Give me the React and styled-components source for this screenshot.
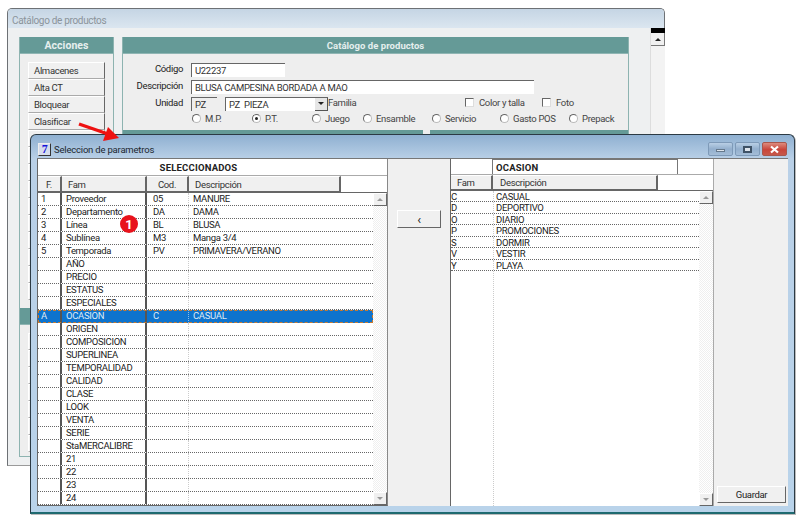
import React from 'react';
import styled, { createGlobalStyle } from 'styled-components';

const Global = createGlobalStyle`
  html, body { margin: 0; padding: 0; background: #fff; }
  body { font-family: Roboto, "Liberation Sans", Arial, sans-serif; font-size: 9.5px; letter-spacing: -.32px; color: #222; }
`;

const Desktop = styled.div`position: relative; width: 802px; height: 525px; overflow: hidden; background: #fff;`;

/* ---------- back window ---------- */
const BackWindow = styled.div`
  position: absolute; left: 7px; top: 8px; width: 658px; height: 458px; box-sizing: border-box;
  border: 1px solid #6d7175; border-bottom-color: #9a9a9a; border-radius: 5px 5px 0 0;
  background: #eef0f1; display: flex; flex-direction: column;
`;
const BackTitle = styled.div`
  height: 19px; flex: none; box-sizing: border-box; padding: 3px 0 0 4px; display: flex; align-items: center;
  background: linear-gradient(#c5d5e4, #dbe6f0); color: #8b949b; font-size: 10px; letter-spacing: -.32px;
  border-radius: 4px 4px 0 0;
`;
const BackBody = styled.div`flex: 1; min-height: 0; display: flex; padding: 9px 0 8px 11px;`;
const SidePanel = styled.div`
  width: 95px; flex: none; box-sizing: border-box; border: 1px solid #8db3b0; border-top: 0; background: #eee;
  overflow: hidden;
`;
const TealBar = styled.div`
  height: 16px; background: #659a97; color: #e6efee; font-weight: 700; font-size: ${p => p.$size || 10}px; letter-spacing: .05px;
  display: flex; align-items: center; justify-content: center; border-bottom: 1px solid #8fb5b3;
`;
const SideButtons = styled.div`display: flex; flex-direction: column; padding: 8px 0 8px 8px;`;
const SideButton = styled.div`
  width: 77px; height: 17px; box-sizing: border-box; padding-left: 5px; display: flex; align-items: center;
  background: #f0f0f0; border: 1px solid #fff; border-right: 1px solid #666; border-bottom: 1px solid #aaa;
  color: #333;
`;
const MainPanel = styled.div`
  width: 507px; margin-left: 8px; flex: none; box-sizing: border-box; border: 1px solid #8db3b0; border-top: 0;
  background: #eee; display: flex; flex-direction: column;
`;
const Form = styled.div`height: 76px; flex: none; box-sizing: border-box; padding-top: 7px; display: flex; flex-direction: column;`;
const FormRow = styled.div`display: flex; align-items: center; height: 17px;`;
const Label = styled.div`width: 60px; text-align: right; margin-right: 8px; flex: none; position: relative; top: -1px;`;
const Input = styled.div`
  width: ${p => p.$w}px; height: 14px; box-sizing: border-box; padding-left: 3px; display: flex; align-items: center;
  background: ${p => p.$muted ? '#eee' : '#fff'}; border-top: 1px solid #666; border-left: 1px solid #666;
  margin-right: ${p => p.$mr || 0}px; flex: none; color: #333;
`;
const SelectButton = styled.div`
  margin-left: auto; width: 13px; height: 13px; background: #e6e6e6; border-right: 1px solid #555; border-bottom: 1px solid #555;
  display: flex; align-items: center; justify-content: center; box-sizing: border-box;
`;
const Check = styled.span`width: 9px; height: 9px; box-sizing: border-box; background: #fff; border-top: 1px solid #666; border-left: 1px solid #666; border-right:1px solid #ddd; border-bottom:1px solid #ddd; margin-right: 5px;`;
const CheckItem = styled.div`display: flex; align-items: center; width: ${p => p.$w}px; flex: none; color: #444; position: relative; top: -1px;`;
const RadioRow = styled.div`display: flex; align-items: center; height: 13px; padding-left: 69px;`;
const RadioItem = styled.div`width: ${p => p.$w}px; flex: none; display: flex; align-items: center; color: #444;`;
const RadioDot = styled.span`
  width: 9px; height: 9px; border-radius: 50%; background: #fff; margin-right: 4px; box-sizing: border-box;
  border: 1px solid #bbb; border-top-color: #666; border-left-color: #666; display: flex; align-items: center; justify-content: center;
  &::after { content: ''; width: 3px; height: 3px; border-radius: 50%; background: ${p => p.$on ? '#222' : 'transparent'}; }
`;
const SplitBar = styled.div`display: flex; height: 16px; background: #659a97;`;
const SplitGap = styled.div`width: 7px; margin-left: 300px; background: #eee;`;
const BackScroll = styled.div`
  width: 14px; margin: -9px 0 -8px 21px; flex: none; background: #f3f3f3; border-left: 1px solid #ddd; display: flex; flex-direction: column;
`;
const BackScrollTop = styled.div`height: 5px; background: #000;`;
const ScrollBtn = styled.div`
  height: 13px; flex: none; box-sizing: border-box; background: #f0f0f0; display: flex; align-items: center; justify-content: center;
  border-bottom: 1px solid #777; border-right: 1px solid #777;
`;
const Up = styled.span`width:0;height:0;border-left:3px solid transparent;border-right:3px solid transparent;border-bottom:3px solid ${p=>p.$c||'#222'};`;
const Down = styled.span`width:0;height:0;border-left:3px solid transparent;border-right:3px solid transparent;border-top:3px solid ${p=>p.$c||'#222'};`;

/* ---------- front window ---------- */
const FrontWindow = styled.div`
  position: absolute; left: 30px; top: 134px; width: 765px; height: 380px; box-sizing: border-box;
  border: 1px solid #2c3a44; border-bottom: 2px solid #1f6a70; border-radius: 6px 6px 0 0;
  background: linear-gradient(#8fb0d1 0, #b9d0e7 24px, #b9d3ea 100%); display: flex; flex-direction: column;
  box-shadow: 1px 1px 0 #bbb;
`;
const FrontTitle = styled.div`height: 23px; flex: none; box-sizing: border-box; display: flex; align-items: center; padding: 5px 7px 0 7px;`;
const AppIcon = styled.div`
  width: 13px; height: 13px; box-sizing: border-box; background: #d6dcec; border: 1px solid #eee; border-right-color: #333; border-bottom-color: #333;
  color: #1515d8; font: 700 12px/11px "Liberation Serif", serif; text-align: center; margin-right: 3px;
`;
const FrontTitleText = styled.div`font-size: 9.5px; color: #1c2630; letter-spacing: -.2px;`;
const WinButtons = styled.div`margin-left: auto; display: flex; gap: 2px;`;
const WinButton = styled.div`
  width: ${p => p.$w}px; height: 14px; box-sizing: border-box; border: 1px solid ${p => p.$close ? '#a9564c' : '#7e9ab8'}; border-radius: 2px;
  background: ${p => p.$close ? 'linear-gradient(#dd8b7e, #c9453a 55%, #c6584a)' : 'linear-gradient(#b9cfe5, #93afcd 50%, #a4bdd7)'};
  display: flex; align-items: center; justify-content: center; color: #fff;
`;
const MinGlyph = styled.span`width: 9px; height: 3px; background: #dde4ec; border: 1px solid #66798c; box-sizing: border-box; margin-top: 3px;`;
const MaxGlyph = styled.span`width: 9px; height: 7px; box-sizing: border-box; background: #dde4ec; border: 2px solid #3f5266;`;
const FrontBody = styled.div`flex: 1; min-height: 0; display: flex; margin: 0 6px 6px 6px; background: #f0f0f0; border-top: 1px solid #777;`;

const LeftGrid = styled.div`
  width: 351px; flex: none; box-sizing: border-box; border-left: 1px solid #666; border-right: 1px solid #888; border-bottom: 1px solid #666;
  background: #fff; display: flex; flex-direction: column;
`;
const RightGrid = styled.div`
  width: 264px; flex: none; box-sizing: border-box; border-left: 1px solid #666; border-right: 1px solid #aaa;
  background: #fff; display: flex; flex-direction: column;
`;
const MiddleColumn = styled.div`width: 62px; flex: none; display: flex; flex-direction: column; align-items: center; padding-top: 51px; box-sizing: border-box;`;
const RightColumn = styled.div`flex: 1; display: flex; flex-direction: column; justify-content: flex-end; align-items: flex-end; padding: 0 2px 3px 0;`;
const WinBtn = styled.div`
  width: ${p => p.$w}px; height: ${p => p.$h}px; box-sizing: border-box; background: #f0f0f0; display: flex; align-items: center; justify-content: center;
  border-top: 1px solid #fff; border-left: 1px solid #fff; border-right: 1px solid #666; border-bottom: 1px solid #666;
  color: #222; font-size: ${p => p.$size || 9.5}px;
`;
const GridTitle = styled.div`
  height: 17px; flex: none; display: flex; align-items: center; justify-content: center; padding-right: 28px;
  font-weight: 700; font-size: 9.5px; letter-spacing: .2px; color: #222; border-bottom: 1px solid #aaa; box-sizing: border-box;
`;
const RightTitleRow = styled.div`height: 16px; flex: none; display: flex; box-sizing: border-box; border-bottom: 1px solid #aaa;`;
const RightTitle = styled.div`
  width: 186px; margin-left: 41px; box-sizing: border-box; border: 1px solid #777; border-bottom: 0; border-left: 1px solid #777;
  font-weight: 700; font-size: 9.5px; letter-spacing: .2px; padding-left: 3px; display: flex; align-items: center;
`;
const HeadRow = styled.div`display: flex; height: ${p => p.$h}px; flex: none; box-sizing: border-box; border-bottom: 1px solid #666;`;
const HeadCell = styled.div`
  width: ${p => p.$w}px; flex: none; box-sizing: border-box; background: #f0f0f0; display: flex; align-items: center;
  justify-content: ${p => p.$center ? 'center' : 'flex-start'}; padding-left: ${p => p.$center ? 0 : p.$pad || 5}px; color: #333;
  border-right: 2px solid #666; border-bottom: 1px solid #666; border-top: 1px solid #fff;
`;
const GridBody = styled.div`flex: 1; min-height: 0; display: flex;`;
const Rows = styled.div`flex: 1; min-width: 0; display: flex; flex-direction: column;`;
const Row = styled.div`
  display: flex; height: 13px; flex: none; box-sizing: border-box; border-bottom: 1px dotted #666; color: #222;
  ${p => p.$sel && 'background:#0e73cd; color:#dfe9f4; outline:1px dashed #c77a30; outline-offset:-1px; border-bottom:0;'}
`;
const RRow = styled.div`
  display: flex; height: 11.43px; flex: none; box-sizing: border-box; border-bottom: 1px dotted #666; color: #222;
`;
const Fill = styled.div`flex: 1; display: flex;`;
const Cell = styled.div`
  width: ${p => p.$w}px; flex: none; box-sizing: border-box; padding-left: ${p => p.$pad || 0}px; white-space: nowrap; overflow: hidden; line-height: 12px;
  border-right: ${p => p.$line === 'heavy' ? '2px solid #555' : p.$line === 'soft' ? `1px dotted ${p.$sel ? '#8ebce6' : '#ccc'}` : '0'};
`;
const CellR = styled(Cell)`line-height: 11px;`;
const ScrollTrack = styled.div`
  width: 14px; flex: none; display: flex; flex-direction: column; justify-content: space-between; box-sizing: border-box;
  background: #f6f6f6 repeating-conic-gradient(#fff 0 25%, #efefef 0 50%) 0 0 / 2px 2px;
`;
const ScrollArrow = styled.div`
  height: 13px; box-sizing: border-box; background: #f0f0f0; display: flex; align-items: center; justify-content: center;
  border-top: 1px solid #fff; border-left: 1px solid #fff; border-right: 1px solid #666; border-bottom: 1px solid #666;
`;

/* ---------- annotations ---------- */
const Badge = styled.div`
  position: absolute; left: 120px; top: 215px; width: 18px; height: 18px; border-radius: 50%; background: #e8121c; color: #fff;
  font-weight: 700; font-size: 13px; letter-spacing: 0; display: flex; align-items: center; justify-content: center;
`;
const Arrow = styled.svg`position: absolute; left: 76px; top: 120px; width: 46px; height: 24px;`;

const sel = [
  ['1','Proveedor','05','MANURE'],['2','Departamento','DA','DAMA'],['3','Línea','BL','BLUSA'],
  ['4','Sublínea','M3','Manga 3/4'],['5','Temporada','PV','PRIMAVERA/VERANO'],['','AÑO'],['','PRECIO'],['','ESTATUS'],['','ESPECIALES'],
  ['A','OCASION','C','CASUAL'],['','ORIGEN'],['','COMPOSICION'],['','SUPERLINEA'],['','TEMPORALIDAD'],['','CALIDAD'],['','CLASE'],
  ['','LOOK'],['','VENTA'],['','SERIE'],['','StaMERCALIBRE'],['','21'],['','22'],['','23'],['','24'],
];
const opts = [['C','CASUAL'],['D','DEPORTIVO'],['O','DIARIO'],['P','PROMOCIONES'],['S','DORMIR'],['V','VESTIR'],['Y','PLAYA']];
const radios = [['M.P.',60],['P.T.',60,true],['Juego',51],['Ensamble',69],['Servicio',68],['Gasto POS',69],['Prepack',50]];
const side1 = ['Almacenes','Alta CT','Bloquear','Clasificar','','','','','','','','','',''];
const side2 = ['','','','','','',''];

export default function App() {
  return (
    <Desktop>
      <Global />
      <BackWindow>
        <BackTitle>Catálogo de productos</BackTitle>
        <BackBody>
          <SidePanel>
            <TealBar $size={10.5}>Acciones</TealBar>
            <SideButtons>{side1.map((t, i) => <SideButton key={i}>{t}</SideButton>)}</SideButtons>
            <TealBar />
            <SideButtons>{side2.map((t, i) => <SideButton key={i}>{t}</SideButton>)}</SideButtons>
          </SidePanel>
          <MainPanel>
            <TealBar $size={9.5}>Catálogo de productos</TealBar>
            <Form>
              <FormRow><Label>Código</Label><Input $w={94}>U22237</Input></FormRow>
              <FormRow><Label>Descripción</Label><Input $w={343}>BLUSA CAMPESINA BORDADA A MAO</Input></FormRow>
              <FormRow>
                <Label>Unidad</Label>
                <Input $w={26} $muted $mr={8}>PZ</Input>
                <Input $w={103}>PZ&nbsp; PIEZA<SelectButton><Down /></SelectButton></Input>
                <CheckItem $w={137}>Familia</CheckItem>
                <CheckItem $w={77}><Check />Color y talla</CheckItem>
                <CheckItem $w={50}><Check />Foto</CheckItem>
              </FormRow>
              <RadioRow>
                {radios.map(([t, w, on]) => <RadioItem key={t} $w={w}><RadioDot $on={on} />{t}</RadioItem>)}
              </RadioRow>
            </Form>
            <SplitBar><SplitGap /></SplitBar>
          </MainPanel>
          <BackScroll>
            <BackScrollTop />
            <ScrollBtn><Up /></ScrollBtn>
          </BackScroll>
        </BackBody>
      </BackWindow>

      <FrontWindow>
        <FrontTitle>
          <AppIcon>7</AppIcon>
          <FrontTitleText>Seleccion de parametros</FrontTitleText>
          <WinButtons>
            <WinButton $w={25}><MinGlyph /></WinButton>
            <WinButton $w={25}><MaxGlyph /></WinButton>
            <WinButton $w={25} $close>
              <svg width="11" height="9" viewBox="0 0 11 9"><path d="M2 1.5 L9 7.5 M9 1.5 L2 7.5" stroke="#fff" strokeWidth="2.2" /></svg>
            </WinButton>
          </WinButtons>
        </FrontTitle>
        <FrontBody>
          <LeftGrid>
            <GridTitle>SELECCIONADOS</GridTitle>
            <HeadRow $h={17}>
              <HeadCell $w={24} $center>F.</HeadCell>
              <HeadCell $w={85} $pad={6}>Fam</HeadCell>
              <HeadCell $w={42} $center>Cod.</HeadCell>
              <HeadCell $w={152} $pad={6}>Descripción</HeadCell>
            </HeadRow>
            <GridBody>
              <Rows>
                {sel.map(([f, fam, c, d], i) => {
                  const s = f === 'A';
                  return (
                    <Row key={i} $sel={s}>
                      <Cell $w={24} $pad={3} $line="heavy">{f}</Cell>
                      <Cell $w={85} $pad={4} $line="heavy">{fam}</Cell>
                      <Cell $w={42} $pad={6} $line="soft" $sel={s}>{c}</Cell>
                      <Cell $w={180} $pad={4}>{d}</Cell>
                    </Row>
                  );
                })}
              </Rows>
              <ScrollTrack>
                <ScrollArrow><Up $c="#999" /></ScrollArrow>
                <ScrollArrow><Down $c="#999" /></ScrollArrow>
              </ScrollTrack>
            </GridBody>
          </LeftGrid>
          <MiddleColumn><WinBtn $w={44} $h={18} $size={13}>‹</WinBtn></MiddleColumn>
          <RightGrid>
            <RightTitleRow><RightTitle>OCASION</RightTitle></RightTitleRow>
            <HeadRow $h={16}>
              <HeadCell $w={42} $pad={6}>Fam</HeadCell>
              <HeadCell $w={165} $pad={7}>Descripción</HeadCell>
            </HeadRow>
            <GridBody>
              <Rows>
                {opts.map(([c, d]) => (
                  <RRow key={c}>
                    <CellR $w={43} $line="soft">{c}</CellR>
                    <CellR $w={200} $pad={2}>{d}</CellR>
                  </RRow>
                ))}
                <Fill><Cell $w={43} $line="soft" /></Fill>
              </Rows>
              <ScrollTrack>
                <ScrollArrow><Up $c="#999" /></ScrollArrow>
                <ScrollArrow><Down $c="#999" /></ScrollArrow>
              </ScrollTrack>
            </GridBody>
          </RightGrid>
          <RightColumn><WinBtn $w={69} $h={17}>Guardar</WinBtn></RightColumn>
        </FrontBody>
      </FrontWindow>

      <Arrow viewBox="0 0 46 24">
        <path d="M3 4 L32 14" stroke="#ee1111" strokeWidth="3.4" fill="none" />
        <path d="M43 18 L27 21 L32 7 Z" fill="#ee1111" />
      </Arrow>
      <Badge>1</Badge>
    </Desktop>
  );
}
